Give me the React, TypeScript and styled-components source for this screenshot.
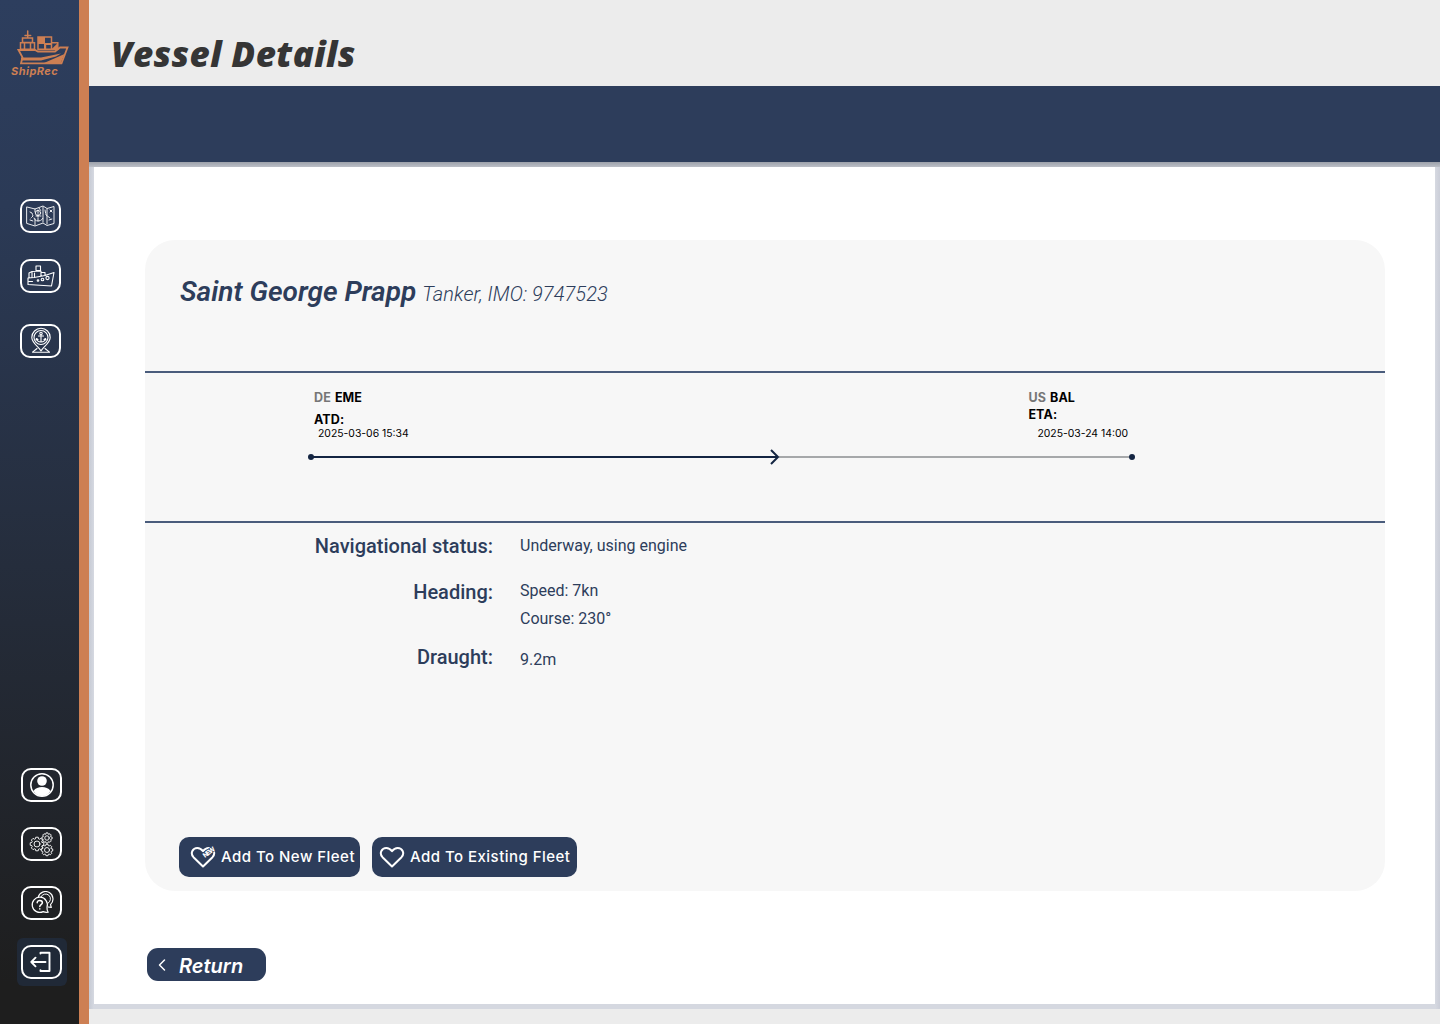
import React from "react";
import styled, { createGlobalStyle } from "styled-components";

const navy = "#2d3d5b";
const orange = "#cd7f53";
const sans = `"Open Sans", "Noto Sans", sans-serif`;

const GlobalStyle = createGlobalStyle`
  * { box-sizing: border-box; }
  body { margin: 0; background: #ececec; font-family: Roboto, sans-serif; }
  p, h1, h2 { margin: 0; }
  button { border: 0; padding: 0; cursor: pointer; }
  svg { display: block; flex: none; }
`;

const Page = styled.div`
  display: flex;
  width: 1440px;
  height: 1024px;
  overflow: hidden;
  background: #ececec;
`;
const Sidebar = styled.nav`
  width: 89px;
  flex: none;
  display: flex;
  flex-direction: column;
  justify-content: space-between;
  padding: 30px 0 38px;
  border-right: 10px solid ${orange};
  background: linear-gradient(#2d3e5e 0%, #2b3a56 20%, #1e1e1e 96%) padding-box;
`;
const Logo = styled.div`
  height: 48px;
  padding-left: 11px;
  color: ${orange};
`;
const LogoArt = styled.svg`
  margin-left: 6px;
`;
const LogoName = styled.p`
  font: italic 700 11px/11px Inter, sans-serif;
  letter-spacing: 0.45px;
  white-space: nowrap;
`;
const NavGroup = styled.div<{ $left: number; $gap: number }>`
  display: flex;
  flex-direction: column;
  align-items: flex-start;
  gap: ${(p) => p.$gap}px;
  padding-left: ${(p) => p.$left}px;
`;
const TopNav = styled(NavGroup)`
  padding-top: 121px;
`;
const NavButton = styled.button<{ $drop?: number }>`
  width: 41px;
  height: 34px;
  display: flex;
  align-items: center;
  justify-content: center;
  margin-top: ${(p) => p.$drop ?? 0}px;
  color: #fff;
  border: 2px solid #fff;
  border-radius: 10px;
  background: transparent;
`;
const ActiveSlot = styled.div`
  width: 50px;
  height: 48px;
  display: flex;
  padding: 7px 0 0 4px;
  margin: -7px 0 0 -4px;
  border-radius: 6px;
  background: #202937;
`;
const Main = styled.main`
  flex: 1;
  display: flex;
  flex-direction: column;
`;
const Header = styled.header`
  height: 86px;
  padding: 29px 0 0 22px;
`;
const Title = styled.h1`
  color: #353535;
  font: italic 800 35px/50px ${sans};
  letter-spacing: 0.37px;
`;
const Band = styled.div`
  height: 76px;
  background: ${navy};
`;
const Frame = styled.div`
  height: 847px;
  padding: 5px;
  background:
    linear-gradient(#9ca1aa, #bcbfc7) top / 100% 5px no-repeat,
    linear-gradient(90deg, #c6cad4, #d6d9e1) left / 5px 100% no-repeat,
    linear-gradient(90deg, #d6d9e1, #cbced8) right / 5px 100% no-repeat,
    #d5d8e0;
`;
const Panel = styled.section`
  height: 100%;
  display: flex;
  flex-direction: column;
  align-items: flex-start;
  padding: 73px 50px 0 51px;
  background: #fff;
`;
const Card = styled.article`
  width: 1240px;
  height: 651px;
  display: flex;
  flex-direction: column;
  border-radius: 30px;
  background: #f7f7f7;
`;
const Identity = styled.div`
  height: 131px;
  display: flex;
  align-items: baseline;
  gap: 6px;
  padding: 35px 0 0 35px;
  color: ${navy};
`;
const VesselName = styled.h2`
  font: italic 600 28px/34px Roboto, sans-serif;
`;
const VesselMeta = styled.p`
  font: italic 300 20px/34px Roboto, sans-serif;
  letter-spacing: 0.07px;
`;
const Voyage = styled.div`
  height: 152px;
  border-top: 2px solid #4a5c7c;
  border-bottom: 2px solid #4a5c7c;
  padding-left: 162px;
`;
const Ports = styled.div`
  height: 74px;
  width: 830px;
  display: flex;
  justify-content: space-between;
  padding: 17px 9px 0 7px;
`;
const Port = styled.div<{ $gap: number; $timeGap: number; $indent: number }>`
  font: 700 12.5px/16px Inter, sans-serif;
  letter-spacing: 0.1px;
  color: #000;
  & > p + p { margin-top: ${(p) => p.$gap}px; }
  & > time {
    display: block;
    margin: ${(p) => p.$timeGap}px 0 0 ${(p) => p.$indent}px;
    font: 400 10.4px/14px Inter, sans-serif;
    letter-spacing: 0;
  }
`;
const Country = styled.span`
  margin-right: 1px;
  color: #767676;
`;
const Facts = styled.dl`
  flex: 1;
  margin: 0;
  padding-top: 9px;
  color: ${navy};
`;
const Fact = styled.div<{ $height: number }>`
  height: ${(p) => p.$height}px;
  display: flex;
  gap: 27px;
`;
const Label = styled.dt`
  width: 348px;
  text-align: right;
  font: 500 20px/28px Roboto, sans-serif;
`;
const Value = styled.dd<{ $shift?: number }>`
  margin: ${(p) => p.$shift ?? 0}px 0 0;
  font: 400 16px/28px Roboto, sans-serif;
`;
const Actions = styled.div`
  display: flex;
  gap: 12px;
  padding: 0 0 14px 34px;
`;
const FleetButton = styled.button<{ $width: number; $left: number }>`
  width: ${(p) => p.$width}px;
  height: 40px;
  display: flex;
  align-items: center;
  gap: 4px;
  padding-left: ${(p) => p.$left}px;
  border-radius: 10px;
  background: ${navy};
  color: #fff;
  font: 500 15px/20px Inter, sans-serif;
  letter-spacing: 0.47px;
  white-space: nowrap;
`;
const ReturnButton = styled.button`
  width: 119px;
  height: 33px;
  display: flex;
  align-items: center;
  gap: 12px;
  margin: 57px 0 0 2px;
  padding: 2px 0 0 10px;
  border-radius: 11px;
  background: ${navy};
  color: #fff;
  font: italic 600 20px/28px Inter, sans-serif;
`;

const line = { fill: "none", stroke: "currentColor", strokeLinecap: "round", strokeLinejoin: "round" } as const;

const ShipLogo = () => (
  <LogoArt width="53" height="36" viewBox="0 0 53 36" {...line} strokeWidth="1.5" strokeLinejoin="miter">
    <path d="M10.700 1v7M8 5.500h5.700M5.500 8h10v4.500h-10zM3.500 12.700h14v6.600h-14zM7.500 13v6M13.500 13v6" />
    <path d="M21 7h13.500v12.300H21zM34.500 12.700h6.300v6.600h-6.300" />
    <path d="M21 7h7v7h-7zM27 13h7v2h-7zM27 14h2.200v5H27zM40.800 13v6.300h-6.300z" fill="currentColor" stroke="none" />
    <path d="M1.500 20H18l3 1.500h17l5-4h7.500l-6 15.800H4l1.500-6z" strokeWidth="1.800" />
    <path d="M4 27.500h20l20-4-5 3-15 4H4zM27 33l20.500-9-4 9.500z" fill="currentColor" stroke="none" />
  </LogoArt>
);

const MapIcon = () => (
  <svg width="29" height="22" viewBox="0 0 29 22" {...line} strokeWidth="0.9">
    <path d="M1 2 9 4l8-3 4 2.500L28 1.500v17l-7 2-4-2.500-8 3-8-2.500zM9 4v3M9 14v6M17 2v15M21 4v15" />
    <circle cx="12" cy="8" r="2.600" />
    <path d="M12 5v11M10 11h5M8 13c1 4 7 4 9 0M4 7l2 1 1 3-2 2M4 15l3 1M19 5l1 5 4 3M24 5l2 2M26 5l-2 2M23 15l3-1M13 3l2 3" strokeDasharray="3 1" />
  </svg>
);
const VesselIcon = () => (
  <svg width="30" height="24" viewBox="0 0 30 24" {...line} strokeWidth="1.1">
    <path d="M2 14 8 13.500l11-2 9-3-2.500 13.500L2 20.500zM3 13.500V9l3-1.500 9-.5v5M6 8v5.500M10 2h4.500v4.500H10zM15 8.500h4v2.500M8.500 9v4" />
    <circle cx="12" cy="16.500" r=".8" /><circle cx="16.500" cy="15.500" r="1.300" /><circle cx="21.500" cy="14" r="1.600" />
    <path d="M2.500 17.500h4" />
  </svg>
);
const PortIcon = () => (
  <svg width="22" height="28" viewBox="0 0 22 28" {...line} strokeWidth="1.1">
    <path d="M11 24C9 20 1.800 16 1.800 10.500a9.200 9.200 0 0 1 18.400 0C20.200 16 13 20 11 24z" />
    <circle cx="11" cy="10.500" r="7" />
    <circle cx="11" cy="6.500" r="1.200" />
    <path d="M11 8v7M8.500 9h5M6.500 11.500c.5 2.500 2 3.500 4.500 3.500s4-1 4.500-3.500M6 13l.5-1.500L8 12.500M14 12.500l1.500-1 .5 1.500M7 21.500 2.500 25.200h17L15 21.500" />
  </svg>
);
const ProfileIcon = () => (
  <svg width="26" height="26" viewBox="0 0 26 26">
    <circle cx="13" cy="13" r="11.200" fill="none" stroke="currentColor" strokeWidth="1.500" />
    <circle cx="13" cy="9" r="4.800" fill="currentColor" />
    <path d="M4.500 19c2-3 5-4 8.500-4s6.500 1 8.500 4c-2 3-5 5-8.500 5s-6.500-2-8.500-5z" fill="currentColor" />
  </svg>
);

function gearPath(cx: number, cy: number, r: number) {
  const points: string[] = [];
  for (let i = 0; i < 8; i++) {
    const a = (i * Math.PI) / 4;
    [[-0.3, 0.78], [-0.18, 1], [0.18, 1], [0.3, 0.78]].forEach(([offset, k]) => {
      points.push(`${(cx + Math.cos(a + offset) * r * k).toFixed(2)} ${(cy + Math.sin(a + offset) * r * k).toFixed(2)}`);
    });
  }
  return `M${points.join("L")}z`;
}
const gears = [[8, 13, 6.900], [18, 7, 5.200], [18, 19, 5.800]];
const GearsIcon = () => (
  <svg width="26" height="26" viewBox="0 0 26 26" {...line} strokeWidth="0.9">
    {gears.map(([x, y, r]) => (
      <g key={y}>
        <path d={gearPath(x, y, r)} />
        <circle cx={x} cy={y} r={r * 0.43} />
      </g>
    ))}
  </svg>
);
const HelpIcon = () => (
  <svg width="24" height="24" viewBox="0 0 24 24" {...line} strokeWidth="1.200">
    <path d="M13.200 20.600A7.600 7.600 0 1 1 17 16.200c-.2 1.500 0 3 1.200 5-2 .3-3.600 0-5-.6z" />
    <path d="M8.200 6.200A7.500 7.500 0 1 1 20.500 13.600l.8 2.800-3.200-.4" />
    <path d="M11 5.800A5 5 0 1 1 18 12.300" strokeWidth="1" />
    <path d="M7.200 11.800c0-3.300 5.200-3.100 5.200 0 0 1.900-2.600 1.900-2.600 3.700M9.800 17.800v.1" strokeWidth="1.500" />
  </svg>
);
const LogoutIcon = () => (
  <svg width="24" height="24" viewBox="0 0 24 24" {...line} strokeWidth="1.900">
    <path d="M10.500 3.600V2.800h9V21h-9v-.8M15.500 12H1.300M5.500 7.700 1.300 12l4.200 4.300" />
  </svg>
);
const NewTag = styled.text`
  font: 800 6.5px Inter, sans-serif;
`;
const HeartIcon = ({ tagged }: { tagged?: boolean }) => (
  <svg width="27" height="24" viewBox="0 0 27 24" {...line} strokeWidth="2">
    <path d="M13 21.500 3.500 12.200C-.3 8 3 3 7.300 3c2.500 0 4.200 1.200 5.700 3.200C14.500 4.200 16.200 3 18.700 3c4.300 0 7.600 5 3.800 9.200z" />
    {tagged && (
      <g transform="translate(15 13) rotate(-38)">
        <path d="M0-2.300h13" stroke={navy} strokeWidth="6" strokeLinecap="butt" />
        <NewTag fill="#fff" stroke="none" textLength="14">NEW</NewTag>
      </g>
    )}
  </svg>
);
const BackArrow = styled.svg`
  margin-top: -2px;
`;
const BackIcon = () => (
  <BackArrow width="10" height="14" viewBox="0 0 10 14" {...line} strokeWidth="1.500">
    <path d="M7.500 2 2.500 7l5 5" />
  </BackArrow>
);
const RouteProgress = () => (
  <svg width="830" height="20" viewBox="0 0 830 20" fill="none" stroke="#142542" strokeWidth="2">
    <path d="M472 10h350" stroke="#a6a8aa" />
    <path d="M4 10h467M464 3l7 7-7 7" />
    <circle cx="4" cy="10" r="3" fill="#142542" stroke="none" />
    <circle cx="825" cy="10" r="3" fill="#142542" stroke="none" />
  </svg>
);

export default function App() {
  return (
    <Page>
      <GlobalStyle />
      <Sidebar>
        <div>
          <Logo>
            <ShipLogo />
            <LogoName>ShipRec</LogoName>
          </Logo>
          <TopNav $left={20} $gap={26}>
            <NavButton aria-label="Map"><MapIcon /></NavButton>
            <NavButton aria-label="Vessels"><VesselIcon /></NavButton>
            <NavButton aria-label="Ports" $drop={5}><PortIcon /></NavButton>
          </TopNav>
        </div>
        <NavGroup $left={21} $gap={25}>
          <NavButton aria-label="Profile"><ProfileIcon /></NavButton>
          <NavButton aria-label="Settings"><GearsIcon /></NavButton>
          <NavButton aria-label="Help"><HelpIcon /></NavButton>
          <ActiveSlot><NavButton aria-label="Log out"><LogoutIcon /></NavButton></ActiveSlot>
        </NavGroup>
      </Sidebar>
      <Main>
        <Header><Title>Vessel Details</Title></Header>
        <Band />
        <Frame>
          <Panel>
            <Card>
              <Identity>
                <VesselName>Saint George Prapp</VesselName>
                <VesselMeta>Tanker, IMO: 9747523</VesselMeta>
              </Identity>
              <Voyage>
                <Ports>
                  <Port $gap={6} $timeGap={-1} $indent={4}>
                    <p><Country>DE</Country> EME</p>
                    <p>ATD:</p>
                    <time>2025-03-06 15:34</time>
                  </Port>
                  <Port $gap={1} $timeGap={4} $indent={9}>
                    <p><Country>US</Country> BAL</p>
                    <p>ETA:</p>
                    <time>2025-03-24 14:00</time>
                  </Port>
                </Ports>
                <RouteProgress />
              </Voyage>
              <Facts>
                <Fact $height={46}><Label>Navigational status:</Label><Value>Underway, using engine</Value></Fact>
                <Fact $height={65}><Label>Heading:</Label><Value $shift={-1}>Speed: 7kn<br />Course: 230°</Value></Fact>
                <Fact $height={28}><Label>Draught:</Label><Value $shift={3}>9.2m</Value></Fact>
              </Facts>
              <Actions>
                <FleetButton $width={181} $left={11}><HeartIcon tagged />Add To New Fleet</FleetButton>
                <FleetButton $width={205} $left={7}><HeartIcon />Add To Existing Fleet</FleetButton>
              </Actions>
            </Card>
            <ReturnButton><BackIcon />Return</ReturnButton>
          </Panel>
        </Frame>
      </Main>
    </Page>
  );
}
